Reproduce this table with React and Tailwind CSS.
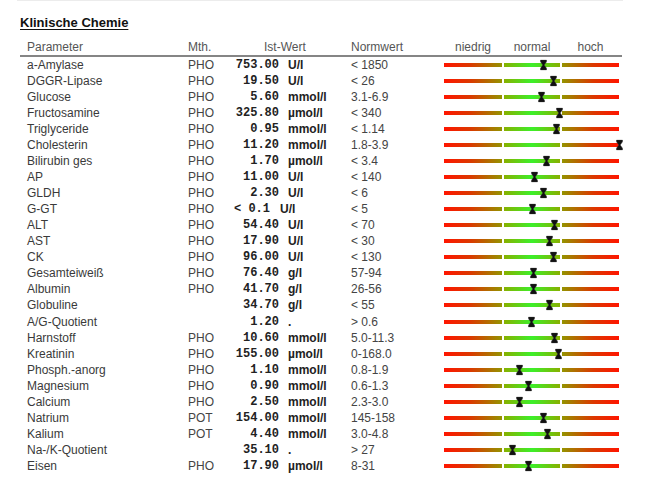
import React from "react";

const rows = [
  ["a-Amylase", "PHO", "753.00", "U/l", "< 1850", 543],
  ["DGGR-Lipase", "PHO", "19.50", "U/l", "< 26", 553],
  ["Glucose", "PHO", "5.60", "mmol/l", "3.1-6.9", 541],
  ["Fructosamine", "PHO", "325.80", "µmol/l", "< 340", 559],
  ["Triglyceride", "PHO", "0.95", "mmol/l", "< 1.14", 556],
  ["Cholesterin", "PHO", "11.20", "mmol/l", "1.8-3.9", 619],
  ["Bilirubin ges", "PHO", "1.70", "µmol/l", "< 3.4", 546],
  ["AP", "PHO", "11.00", "U/l", "< 140", 534],
  ["GLDH", "PHO", "2.30", "U/l", "< 6", 543],
  ["G-GT", "PHO", "< 0.1", "U/l", "< 5", 532, true],
  ["ALT", "PHO", "54.40", "U/l", "< 70", 554],
  ["AST", "PHO", "17.90", "U/l", "< 30", 549],
  ["CK", "PHO", "96.00", "U/l", "< 130", 553],
  ["Gesamteiweiß", "PHO", "76.40", "g/l", "57-94", 533],
  ["Albumin", "PHO", "41.70", "g/l", "26-56", 533],
  ["Globuline", "", "34.70", "g/l", "< 55", 549],
  ["A/G-Quotient", "", "1.20", ".", "> 0.6", 531],
  ["Harnstoff", "PHO", "10.60", "mmol/l", "5.0-11.3", 554],
  ["Kreatinin", "PHO", "155.00", "µmol/l", "0-168.0", 558],
  ["Phosph.-anorg", "PHO", "1.10", "mmol/l", "0.8-1.9", 519],
  ["Magnesium", "PHO", "0.90", "mmol/l", "0.6-1.3", 528],
  ["Calcium", "PHO", "2.50", "mmol/l", "2.3-3.0", 519],
  ["Natrium", "POT", "154.00", "mmol/l", "145-158", 543],
  ["Kalium", "POT", "4.40", "mmol/l", "3.0-4.8", 547],
  ["Na-/K-Quotient", "", "35.10", ".", "> 27", 512],
  ["Eisen", "PHO", "17.90", "µmol/l", "8-31", 528],
];

function Marker({ x }) {
  return (
    <svg
      className="absolute top-1/2 -translate-y-1/2"
      style={{ left: x - 444 - 3.5 }}
      width="7"
      height="11"
      viewBox="0 0 7 11"
    >
      <path
        d="M0.5 0.5 H6.5 V2.2 L4.2 5.5 L6.5 8.8 V10.5 H0.5 V8.8 L2.8 5.5 L0.5 2.2 Z"
        fill="#111"
        stroke="#333"
        strokeWidth="0.5"
      />
    </svg>
  );
}

function Bar({ x }) {
  return (
    <div className="relative flex h-[16px] w-[175px] items-center gap-[2px]">
      <div className="h-[4px] w-[58px] bg-[linear-gradient(to_right,#ff1500,#dc3800_45%,#949400)]" />
      <div className="h-[4px] w-[56px] bg-[linear-gradient(to_right,#88b000,#3cf02a_50%,#88b000)]" />
      <div className="h-[4px] w-[57px] bg-[linear-gradient(to_right,#949400,#dc3800_55%,#ff1500)]" />
      <Marker x={x} />
    </div>
  );
}

export default function App() {
  return (
    <div
      className="relative h-[492px] w-[658px] overflow-hidden bg-white"
      style={{ fontFamily: '"Liberation Sans", Arial, sans-serif' }}
    >
      <div className="ml-[17px] h-px w-[606px] bg-[#ececec]" />
      <div className="pl-[20px]">
        <div className="mt-[14px] text-[13px] font-bold leading-[16px] text-[#111] underline decoration-1 underline-offset-[2px]">
          Klinische Chemie
        </div>
        <div className="mt-[9px] flex h-[17px] w-[602px] items-center border-b-2 border-[#858585] pb-[2px] text-[12px] leading-[14px] text-[#555]">
          <div className="ml-[7px] w-[161px]">Parameter</div>
          <div className="w-[46px]">Mth.</div>
          <div className="w-[117px] pl-[30px]">Ist-Wert</div>
          <div className="w-[93px]">Normwert</div>
          <div className="flex gap-[2px]">
            <div className="w-[58px] text-center">niedrig</div>
            <div className="w-[56px] text-center">normal</div>
            <div className="w-[57px] text-center">hoch</div>
          </div>
        </div>
        <div>
          {rows.map(([name, mth, val, unit, norm, x, raw]) => (
            <div
              key={name}
              className="flex h-[16.04px] items-center text-[12px] leading-[16px] text-[#3a3a3a]"
            >
              <div className="ml-[7px] w-[161px]">{name}</div>
              <div className="w-[46px] text-[#444]">{mth}</div>
              <div className="flex w-[117px] items-center">
                {raw ? (
                  <>
                    <span
                      className="whitespace-pre font-bold text-[#222]"
                      style={{ fontFamily: '"Liberation Mono", "DejaVu Sans Mono", monospace' }}
                    >
                      {"< 0.1"}
                    </span>
                    <span className="ml-[10px] font-bold text-[#222]">{unit}</span>
                  </>
                ) : (
                  <>
                    <span
                      className="w-[45px] text-right font-bold text-[#222]"
                      style={{ fontFamily: '"Liberation Mono", "DejaVu Sans Mono", monospace' }}
                    >
                      {val}
                    </span>
                    <span className="ml-[9px] font-bold text-[#222]">{unit}</span>
                  </>
                )}
              </div>
              <div className="w-[93px] text-[#444]">{norm}</div>
              <Bar x={x} />
            </div>
          ))}
        </div>
      </div>
    </div>
  );
}
